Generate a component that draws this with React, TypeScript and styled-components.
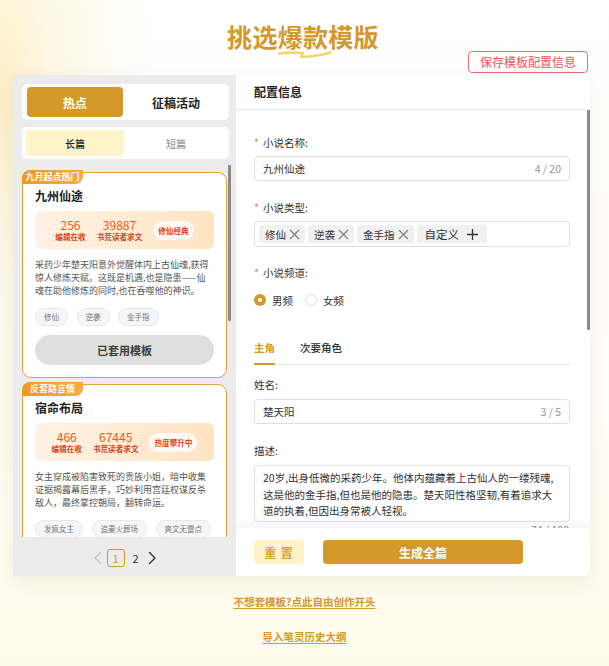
import React from "react";
import styled, { createGlobalStyle } from "styled-components";

const GOLD = "#d4982b";

const Global = createGlobalStyle`
  html, body { margin: 0; padding: 0; }
  body {
    font-family: "Noto Sans CJK SC", "Noto Sans", sans-serif;
    color: #303133;
  }
  * { box-sizing: border-box; }
`;

const Page = styled.div`
  width: 609px;
  height: 666px;
  overflow: hidden;
  padding-top: 21px;
  display: flex;
  flex-direction: column;
  background:
    radial-gradient(ellipse 150px 430px at 0px 90px, #fcefc6 0%, rgba(253, 243, 212, 0.6) 35%, rgba(255, 255, 255, 0) 100%),
    linear-gradient(180deg, #ffffff 0px, #fffefb 300px, #fffcf0 560px, #fffbec 666px);
`;

const TitleRow = styled.div`
  display: flex;
  justify-content: center;
  height: 30px;
`;

const Title = styled.h1`
  position: relative;
  margin: 0 0 0 -3px;
  font-size: 25px;
  line-height: 30px;
  font-weight: 700;
  color: ${GOLD};
  letter-spacing: 0.3px;
`;

const Squiggle = styled.svg`
  position: absolute;
  left: 50px;
  top: 28px;
`;

const ActionRow = styled.div`
  display: flex;
  justify-content: flex-end;
  padding-right: 21px;
  height: 22px;
  margin-bottom: 2px;
`;

const SaveButton = styled.button`
  height: 22px;
  padding: 0 11px;
  font-family: inherit;
  font-size: 12px;
  line-height: 20px;
  color: #f0545c;
  background: #fff;
  border: 1px solid #f26a70;
  border-radius: 4px;
`;

const Panel = styled.div`
  margin-left: 13px;
  width: 577px;
  height: 501px;
  display: grid;
  grid-template-columns: 223px 1fr;
  border-radius: 0 6px 6px 0;
  box-shadow: 0 6px 20px rgba(60, 50, 20, 0.07);
`;

/* ---------- left pane ---------- */

const LeftPane = styled.div`
  background: #ececec;
  padding: 9px 0 9px 0;
  display: flex;
  flex-direction: column;
  min-height: 0;
`;

const TabBox = styled.div`
  margin-left: 9px;
  width: 207px;
  height: 36px;
  padding: 3px 5px;
  background: #fff;
  border-radius: 5px;
  display: grid;
  grid-template-columns: 1fr 1fr;
  gap: 5px;
`;

const MainTab = styled.div<{ $active?: boolean }>`
  display: flex;
  align-items: center;
  justify-content: center;
  border-radius: 4px;
  font-size: 12px;
  font-weight: 700;
  background: ${(p) => (p.$active ? GOLD : "transparent")};
  color: ${(p) => (p.$active ? "#fff" : "#1f1f1f")};
`;

const SubTabBox = styled(TabBox)`
  margin-top: 7px;
  height: 32px;
  padding: 3px 4px;
  gap: 3px;
`;

const SubTab = styled.div<{ $active?: boolean }>`
  display: flex;
  align-items: center;
  justify-content: center;
  border-radius: 4px;
  font-size: 10px;
  font-weight: 500;
  background: ${(p) => (p.$active ? "#fff3c9" : "transparent")};
  color: ${(p) => (p.$active ? "#222" : "#9a9a9a")};
`;

const ListWrap = styled.div`
  position: relative;
  margin: 6px 0 0 9px;
  width: 209px;
  height: 372px;
`;

const ScrollThumb = styled.div<{ $h: number; $w: number }>`
  position: absolute;
  right: 0;
  top: 0;
  width: ${(p) => p.$w}px;
  height: ${(p) => p.$h}px;
  background: #8a8a8a;
  border-radius: 1px;
`;

const CardList = styled.div`
  height: 100%;
  overflow: hidden;
  padding: 7px 0 20px 0;
  display: flex;
  flex-direction: column;
  gap: 6px;
`;

const Card = styled.div`
  position: relative;
  flex-shrink: 0;
  width: 205px;
  background: #fff;
  border: 1px solid #e2a23c;
  border-radius: 9px;
  padding: 15px 12px 12px;
`;

const Badge = styled.span`
  position: absolute;
  top: -3px;
  left: -1px;
  min-width: 61px;
  height: 14px;
  padding: 0 3px;
  text-align: center;
  font-size: 9px;
  line-height: 14px;
  font-weight: 700;
  color: #fff;
  background: linear-gradient(90deg, #f29722, #f7ab45);
  border-radius: 8px 0 8px 0;
`;

const CardTitle = styled.div`
  font-size: 12px;
  line-height: 16px;
  font-weight: 700;
  color: #222;
  margin-bottom: 7px;
`;

const StatsBox = styled.div`
  height: 38px;
  border-radius: 6px;
  background: linear-gradient(90deg, #fff2e5 0%, #ffe4c2 100%);
  display: flex;
  align-items: center;
  justify-content: center;
  gap: 11px;
  margin-bottom: 9px;
`;

const Stat = styled.div`
  display: flex;
  flex-direction: column;
  align-items: center;
`;

const StatNum = styled.span`
  font-size: 12px;
  line-height: 14px;
  color: #ec5a1e;
`;

const StatLabel = styled.span`
  font-size: 7.6px;
  line-height: 10px;
  font-weight: 700;
  color: #d8401c;
`;

const HotPill = styled.span`
  height: 19px;
  padding: 0 5px;
  border-radius: 10px;
  background: #fffaf3;
  font-size: 7.6px;
  line-height: 19px;
  font-weight: 700;
  color: #e0461a;
`;

const Desc = styled.p`
  margin: 0 0 11px;
  font-size: 9px;
  line-height: 13px;
  color: #555;
`;

const TagRow = styled.div`
  display: flex;
  gap: 8.5px;
  margin-bottom: 9px;
`;

const CardTag = styled.span`
  height: 18px;
  padding: 0 8px;
  border: 1px solid #e6e8ec;
  background: #f5f6f8;
  border-radius: 9px;
  font-size: 7.5px;
  line-height: 16px;
  color: #777;
`;

const UsedButton = styled.div`
  height: 30px;
  border-radius: 15px;
  background: #dedede;
  display: flex;
  align-items: center;
  justify-content: center;
  font-size: 11px;
  font-weight: 700;
  color: #3d3d3d;
`;

const Pager = styled.div`
  margin-top: 12px;
  height: 18px;
  display: flex;
  justify-content: center;
  align-items: center;
  gap: 4px;
`;

const PageArrow = styled.span<{ $disabled?: boolean }>`
  width: 12px;
  height: 18px;
  display: flex;
  align-items: center;
  justify-content: center;
  color: ${(p) => (p.$disabled ? "#c0c4cc" : "#303133")};
`;

const PageNum = styled.span<{ $active?: boolean }>`
  min-width: ${(p) => (p.$active ? 18 : 14)}px;
  height: 18px;
  padding: 0 2px;
  display: flex;
  align-items: center;
  justify-content: center;
  border-radius: 3px;
  font-size: 11px;
  border: 1px solid ${(p) => (p.$active ? GOLD : "transparent")};
  color: ${(p) => (p.$active ? GOLD : "#303133")};
`;

/* ---------- right pane ---------- */

const RightPane = styled.div`
  background: #fff;
  border-radius: 0 6px 6px 0;
  display: flex;
  flex-direction: column;
  min-height: 0;
  overflow: hidden;
`;

const PaneHeader = styled.div`
  height: 35px;
  flex-shrink: 0;
  padding-left: 18px;
  font-size: 12px;
  line-height: 34px;
  font-weight: 600;
  color: #222;
  border-bottom: 1px solid #e4e7ed;
`;

const FormArea = styled.div`
  position: relative;
  flex: 1;
  min-height: 0;
`;

const FormScroll = styled.div`
  height: 100%;
  overflow: hidden;
  padding: 25px 20px 60px 18px;
`;

const Field = styled.div<{ $gap?: number; $mb?: number }>`
  display: flex;
  flex-direction: column;
  gap: ${(p) => p.$gap ?? 5}px;
  margin-bottom: ${(p) => p.$mb ?? 19}px;
`;

const Label = styled.label`
  font-size: 10.5px;
  line-height: 16px;
  color: #303133;
`;

const Star = styled.span`
  color: #f56c6c;
  margin-right: 4px;
`;

const InputBox = styled.div`
  height: 25px;
  border: 1px solid #dcdfe6;
  border-radius: 4px;
  padding: 0 8px;
  display: flex;
  align-items: center;
  justify-content: space-between;
  font-size: 10.5px;
  color: #303133;
`;

const Count = styled.span`
  font-size: 10.5px;
  color: #909399;
`;

const TagInput = styled.div`
  height: 26px;
  border: 1px solid #dcdfe6;
  border-radius: 4px;
  padding: 0 4px;
  display: flex;
  align-items: center;
  gap: 3px;
`;

const TypeTag = styled.span<{ $custom?: boolean }>`
  height: 18px;
  display: inline-flex;
  align-items: center;
  gap: ${(p) => (p.$custom ? 8 : 3)}px;
  padding: ${(p) => (p.$custom ? "0 9px 0 8px" : "0 5px 0 6px")};
  background: #f0f0f0;
  border-radius: 3px;
  font-size: ${(p) => (p.$custom ? 11.5 : 10.5)}px;
  color: #303133;
`;

const RadioRow = styled.div`
  display: flex;
  align-items: center;
  height: 16px;
  gap: 12px;
`;

const RadioItem = styled.span`
  display: inline-flex;
  align-items: center;
  gap: 6px;
  font-size: 10.5px;
  color: #303133;
`;

const RadioDot = styled.span<{ $checked?: boolean }>`
  width: 12px;
  height: 12px;
  border-radius: 50%;
  position: relative;
  background: ${(p) => (p.$checked ? GOLD : "#fff")};
  border: ${(p) => (p.$checked ? "none" : "1px solid #dcdfe6")};
  &::after {
    content: "";
    display: ${(p) => (p.$checked ? "block" : "none")};
    position: absolute;
    left: 4px;
    top: 4px;
    width: 4px;
    height: 4px;
    border-radius: 50%;
    background: #fff;
  }
`;

const RoleTabs = styled.div`
  display: flex;
  gap: 25px;
  border-bottom: 1px solid #e4e7ed;
  margin-bottom: 12px;
`;

const RoleTab = styled.span<{ $active?: boolean }>`
  font-size: 10.5px;
  line-height: 16px;
  padding-bottom: 7px;
  margin-bottom: -1px;
  font-weight: ${(p) => (p.$active ? 700 : 500)};
  color: ${(p) => (p.$active ? GOLD : "#303133")};
  border-bottom: 2px solid ${(p) => (p.$active ? GOLD : "transparent")};
`;

const TextArea = styled.textarea`
  display: block;
  width: 100%;
  height: 57px;
  resize: none;
  overflow: hidden;
  border: 1px solid #dcdfe6;
  border-radius: 4px;
  padding: 4px 14px 4px 8px;
  font-family: "Noto Sans CJK SC", "Noto Sans", sans-serif;
  font-size: 10.5px;
  line-height: 16.5px;
  color: #303133;
  outline: none;
`;

const AreaCount = styled(Count)`
  align-self: flex-end;
  line-height: 14px;
  margin-top: -5px;
  margin-right: 1px;
`;

const Footer = styled.div`
  position: relative;
  flex-shrink: 0;
  height: 48px;
  padding: 12px 18px;
  display: flex;
  gap: 19px;
  background: #fff;
  box-shadow: 0 -3px 8px rgba(0, 40, 60, 0.06);
`;

const ResetButton = styled.button`
  width: 50px;
  height: 24px;
  border: none;
  border-radius: 4px;
  background: #fff2c6;
  color: #d9a532;
  font-family: inherit;
  font-size: 12px;
  font-weight: 700;
  letter-spacing: 1px;
`;

const GenerateButton = styled.button`
  width: 200px;
  height: 24px;
  border: none;
  border-radius: 4px;
  background: ${GOLD};
  color: #fff;
  font-family: inherit;
  font-size: 12px;
  font-weight: 700;
`;

/* ---------- bottom links ---------- */

const Links = styled.div`
  margin-top: 19px;
  display: flex;
  flex-direction: column;
  align-items: center;
  gap: 21px;
`;

const TextLink = styled.a`
  font-size: 10.5px;
  line-height: 14px;
  font-weight: 700;
  color: ${GOLD};
  text-decoration: underline;
  text-underline-offset: 2px;
`;

/* ---------- data ---------- */

type Template = {
  badge: string;
  title: string;
  edit: number;
  readers: number;
  pill: string;
  desc: string;
  tags: string[];
  used?: boolean;
};

const templates: Template[] = [
  {
    badge: "九月起点热门",
    title: "九州仙途",
    edit: 256,
    readers: 39887,
    pill: "修仙经典",
    desc: "采药少年楚天阳意外觉醒体内上古仙魂,获得惊人修炼天赋。这既是机遇,也是隐患——仙魂在助他修炼的同时,也在吞噬他的神识。",
    tags: ["修仙", "逆袭", "金手指"],
    used: true,
  },
  {
    badge: "反套路言情",
    title: "宿命布局",
    edit: 466,
    readers: 67445,
    pill: "热度攀升中",
    desc: "女主穿成被陷害致死的贵族小姐，暗中收集证据揭露幕后黑手，巧妙利用宫廷权谋反杀敌人，最终掌控朝局，翻转命运。",
    tags: ["发疯女主", "追妻火葬场", "爽文无雷点"],
  },
  {
    badge: "都市爆款",
    title: "都市神医",
    edit: 312,
    readers: 45210,
    pill: "口碑爆棚",
    desc: "被逐出家门的医学天才重回都市，凭借祖传医术救死扶伤，一步步揭开当年家族败落的真相。",
    tags: ["都市", "神医", "打脸"],
  },
];

const CloseIcon = () => (
  <svg width="11" height="11" viewBox="0 0 11 11" fill="none">
    <path d="M1 1L10 10M10 1L1 10" stroke="#808080" strokeWidth="1.2" />
  </svg>
);

const PlusIcon = () => (
  <svg width="11" height="11" viewBox="0 0 11 11" fill="none">
    <path d="M5.5 0V11M0 5.5H11" stroke="#333" strokeWidth="1.3" />
  </svg>
);

const ArrowIcon = ({ dir }: { dir: "left" | "right" }) => (
  <svg width="10" height="14" viewBox="0 0 10 14" fill="none">
    <path
      d={dir === "left" ? "M8.5 1.5L3 7l5.5 5.5" : "M1.5 1.5L7 7l-5.5 5.5"}
      stroke="currentColor"
      strokeWidth="1.4"
      strokeLinecap="round"
      strokeLinejoin="round"
    />
  </svg>
);

const TemplateCard = ({ t }: { t: Template }) => (
  <Card>
    <Badge>{t.badge}</Badge>
    <CardTitle>{t.title}</CardTitle>
    <StatsBox>
      <Stat>
        <StatNum>{t.edit}</StatNum>
        <StatLabel>编辑在收</StatLabel>
      </Stat>
      <Stat>
        <StatNum>{t.readers}</StatNum>
        <StatLabel>书荒读者求文</StatLabel>
      </Stat>
      <HotPill>{t.pill}</HotPill>
    </StatsBox>
    <Desc>{t.desc}</Desc>
    <TagRow>
      {t.tags.map((g) => (
        <CardTag key={g}>{g}</CardTag>
      ))}
    </TagRow>
    <UsedButton>{t.used ? "已套用模板" : "套用模板"}</UsedButton>
  </Card>
);

export default function App() {
  return (
    <Page>
      <Global />
      <TitleRow>
        <Title>
          挑选爆款模版
          <Squiggle width="56" height="10" viewBox="0 0 56 10" fill="none">
            <path
              d="M2 4.5 Q 14 2.8 26 4 L 24 8 Q 40 7.2 54 3.5"
              stroke="#f7d46b"
              strokeWidth="2.4"
              strokeLinecap="round"
              strokeLinejoin="round"
            />
          </Squiggle>
        </Title>
      </TitleRow>
      <ActionRow>
        <SaveButton>保存模板配置信息</SaveButton>
      </ActionRow>

      <Panel>
        <LeftPane>
          <TabBox>
            <MainTab $active>热点</MainTab>
            <MainTab>征稿活动</MainTab>
          </TabBox>
          <SubTabBox>
            <SubTab $active>长篇</SubTab>
            <SubTab>短篇</SubTab>
          </SubTabBox>
          <ListWrap>
            <CardList>
              {templates.map((t) => (
                <TemplateCard key={t.title} t={t} />
              ))}
            </CardList>
            <ScrollThumb $w={3} $h={156} />
          </ListWrap>
          <Pager>
            <PageArrow $disabled>
              <ArrowIcon dir="left" />
            </PageArrow>
            <PageNum $active>1</PageNum>
            <PageNum>2</PageNum>
            <PageArrow>
              <ArrowIcon dir="right" />
            </PageArrow>
          </Pager>
        </LeftPane>

        <RightPane>
          <PaneHeader>配置信息</PaneHeader>
          <FormArea>
            <FormScroll>
              <Field>
                <Label>
                  <Star>*</Star>小说名称:
                </Label>
                <InputBox>
                  <span>九州仙途</span>
                  <Count>4 / 20</Count>
                </InputBox>
              </Field>
              <Field $mb={18}>
                <Label>
                  <Star>*</Star>小说类型:
                </Label>
                <TagInput>
                  {["修仙", "逆袭", "金手指"].map((g) => (
                    <TypeTag key={g}>
                      {g}
                      <CloseIcon />
                    </TypeTag>
                  ))}
                  <TypeTag $custom>
                    自定义
                    <PlusIcon />
                  </TypeTag>
                </TagInput>
              </Field>
              <Field $gap={11} $mb={32}>
                <Label>
                  <Star>*</Star>小说频道:
                </Label>
                <RadioRow>
                  <RadioItem>
                    <RadioDot $checked />
                    男频
                  </RadioItem>
                  <RadioItem>
                    <RadioDot />
                    女频
                  </RadioItem>
                </RadioRow>
              </Field>
              <RoleTabs>
                <RoleTab $active>主角</RoleTab>
                <RoleTab>次要角色</RoleTab>
              </RoleTabs>
              <Field $gap={6}>
                <Label>姓名:</Label>
                <InputBox>
                  <span>楚天阳</span>
                  <Count>3 / 5</Count>
                </InputBox>
              </Field>
              <Field $gap={6} $mb={0}>
                <Label>描述:</Label>
                <TextArea
                  readOnly
                  defaultValue="20岁,出身低微的采药少年。他体内蕴藏着上古仙人的一缕残魂,这是他的金手指,但也是他的隐患。楚天阳性格坚韧,有着追求大道的执着,但因出身常被人轻视。"
                />
                <AreaCount>74 / 100</AreaCount>
              </Field>
            </FormScroll>
            <ScrollThumb $w={3} $h={220} />
          </FormArea>
          <Footer>
            <ResetButton>重 置</ResetButton>
            <GenerateButton>生成全篇</GenerateButton>
          </Footer>
        </RightPane>
      </Panel>

      <Links>
        <TextLink>不想套模板?点此自由创作开头</TextLink>
        <TextLink>导入笔灵历史大纲</TextLink>
      </Links>
    </Page>
  );
}
